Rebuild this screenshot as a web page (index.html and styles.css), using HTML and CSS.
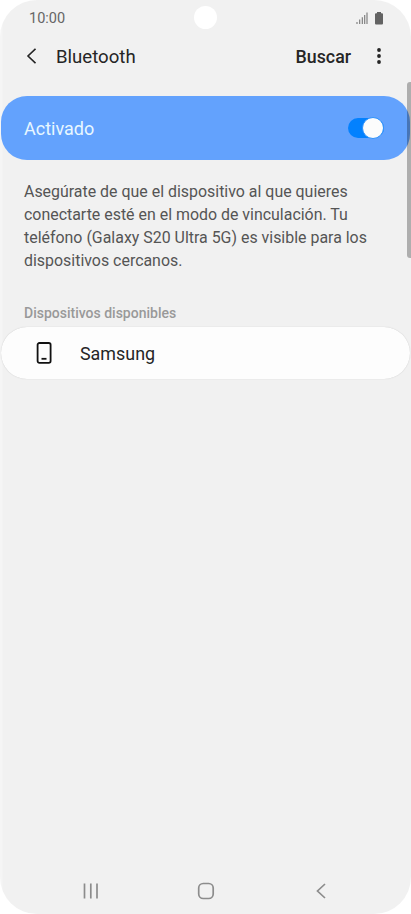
FILE: index.html
```html
<!DOCTYPE html>
<html lang="es">
<head>
<meta charset="utf-8">
<title>Bluetooth</title>
<link rel="stylesheet" href="styles.css">
</head>
<body>
<div class="phone">
  <header class="status">
    <span class="time">10:00</span>
    <span class="camera"></span>
    <svg class="signal" width="12" height="12" viewBox="0 0 12 12"><path d="M1 12v-2M3.700 12V7.500M6.300 12V5.200M8.700 12V3M11 12V.5" /></svg>
    <svg class="battery" width="8" height="13" viewBox="0 0 8 13"><path d="M2 0h4v1.200H7a1 1 0 0 1 1 1V11.500a1 1 0 0 1-1 1H1a1 1 0 0 1-1-1V2.200a1 1 0 0 1 1-1h1z"/></svg>
  </header>
  <nav class="toolbar">
    <svg class="back" width="10" height="16" viewBox="0 0 10 16"><path d="M9.500 .8 2 8 9.500 15.200"/></svg>
    <h1 class="title">Bluetooth</h1>
    <span class="search">Buscar</span>
    <svg class="more" width="4" height="16" viewBox="0 0 4 16"><circle cx="2" cy="2" r="1.900"/><circle cx="2" cy="8" r="1.900"/><circle cx="2" cy="14" r="1.900"/></svg>
  </nav>
  <main>
    <section class="enabled">
      <span>Activado</span>
      <span class="switch"><span class="knob"></span></span>
    </section>
    <p class="info">Asegúrate de que el dispositivo al que quieres<br>conectarte esté en el modo de vinculación. Tu<br>teléfono (Galaxy S20 Ultra 5G) es visible para los<br>dispositivos cercanos.</p>
    <h2 class="subtitle">Dispositivos disponibles</h2>
    <section class="device">
      <svg width="16" height="22" viewBox="0 0 16 22"><rect x="1.600" y="1" width="13" height="19.800" rx="1.800"/><path d="M5.500 16.800h5"/></svg>
      <span>Samsung</span>
    </section>
  </main>
  <footer class="navbar">
    <svg width="16" height="16" viewBox="0 0 16 16"><path d="M1.500 .5v15M7.800 .5v15M14 .5v15"/></svg>
    <svg class="home" width="18" height="18" viewBox="0 0 18 18"><rect x="1.700" y="1.500" width="14.500" height="15" rx="4.500"/></svg>
    <svg width="10" height="16" viewBox="0 0 10 16"><path d="M9 1 1.500 8 9 15"/></svg>
  </footer>
  <div class="scrollbar"></div>
</div>
</body>
</html>
```
FILE: styles.css
```css
* { box-sizing: border-box; }
body { margin: 0; background: #fff; font-family: Roboto, sans-serif; }
svg { display: block; flex: none; }
h1, h2, p { margin: 0; }
.phone {
  position: relative;
  width: 411px;
  height: 914px;
  display: flex;
  flex-direction: column;
  background: linear-gradient(90deg, #f5f5f5 2px, #f1f1f1 3px);
  border-radius: 37px;
  overflow: hidden;
}
.status {
  position: relative;
  height: 36px;
  display: flex;
  align-items: center;
  padding: 0 28px 0 29px;
}
.time { font-size: 14.5px; color: #666; }
.camera {
  position: absolute;
  left: 194px;
  top: 6px;
  width: 23px;
  height: 23px;
  border-radius: 50%;
  background: #fff;
}
.signal { margin-left: auto; stroke: #777; stroke-width: 1.1; }
.battery { margin-left: 7px; fill: #636363; }
.toolbar {
  height: 60px;
  display: flex;
  align-items: center;
  padding: 0 30px 20px 26px;
  color: #252525;
}
.back { fill: none; stroke: #252525; stroke-width: 1.6; }
.title { margin-left: 20px; padding-top: 2px; font-size: 18.6px; font-weight: 400; }
.search { margin-left: auto; font-size: 17.8px; font-weight: 500; }
.more { margin-left: 26px; fill: #252525; }
.enabled {
  height: 64px;
  margin: 0 1px;
  display: flex;
  align-items: center;
  justify-content: space-between;
  padding: 0 26px 0 23px;
  border-radius: 26px;
  background: #63a2fd;
  color: #e8f7ff;
  font-size: 18px;
}
.switch {
  width: 36px;
  height: 20px;
  display: flex;
  align-items: center;
  justify-content: flex-end;
  border-radius: 10px;
  background: #0381fe;
}
.knob {
  width: 22px;
  height: 22px;
  flex: none;
  border: 1px solid #2d91fb;
  border-radius: 50%;
  background: #fcfcfc;
}
.info {
  margin: 21px 0 0 24px;
  font-size: 15.93px;
  line-height: 22.9px;
  color: #555;
  white-space: nowrap;
}
.subtitle {
  margin: 31.4px 0 0 24px;
  height: 23px;
  font-size: 14px;
  line-height: 18px;
  font-weight: 500;
  color: #999;
}
.device {
  height: 52px;
  margin: 0 1px;
  display: flex;
  align-items: center;
  gap: 28px;
  padding-left: 35px;
  border-radius: 26px;
  background: #fdfdfd;
  box-shadow: 0 0 1px #bbb;
  color: #252525;
  font-size: 17.9px;
}
.device svg { fill: none; stroke: #111; stroke-width: 1.8; }
.navbar {
  margin-top: auto;
  height: 47px;
  display: flex;
  align-items: center;
  justify-content: space-between;
  padding: 0 85px 0 83px;
}
.navbar svg { fill: none; stroke: #8c8c8c; stroke-width: 1.7; }
.navbar .home { margin-right: 4px; }
.scrollbar {
  position: absolute;
  left: 407px;
  top: 82px;
  width: 6px;
  height: 176px;
  border-radius: 3px;
  background: rgba(0, 0, 0, .28);
}
```
